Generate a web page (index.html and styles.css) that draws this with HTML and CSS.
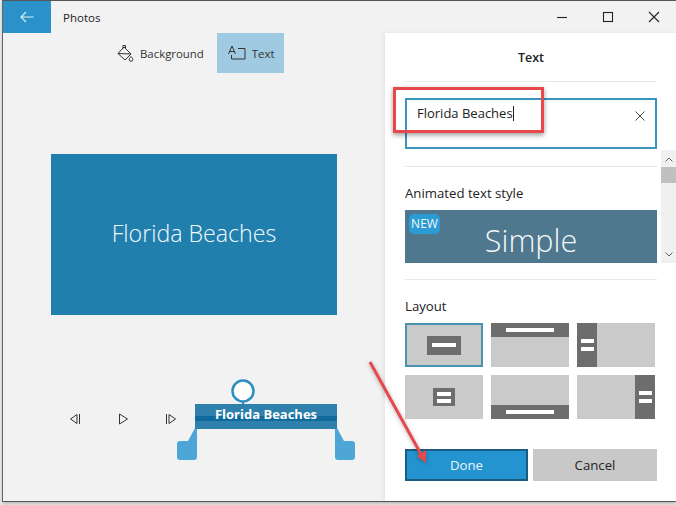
FILE: index.html
```html
<!DOCTYPE html>
<html lang="en">
<head>
<meta charset="utf-8">
<title>Photos</title>
<link rel="stylesheet" href="styles.css">
</head>
<body>
<div class="window">
  <header class="titlebar">
    <button class="back" aria-label="Back">
      <svg width="16" height="16" viewBox="0 0 16 16"><path d="M14.500 8H2M7 3 2 8l5 5" fill="none" stroke="#d9edf8" stroke-width="1.200"/></svg>
    </button>
    <span class="app-name">Photos</span>
    <div class="win-controls">
      <svg width="12" height="12" viewBox="0 0 12 12"><path d="M1 6.500h10" stroke="#222" stroke-width="1.100"/></svg>
      <svg width="12" height="12" viewBox="0 0 12 12"><rect x="1.500" y="1.500" width="9" height="9" fill="none" stroke="#222" stroke-width="1.100"/></svg>
      <svg width="12" height="12" viewBox="0 0 12 12"><path d="M1 1l10 10M11 1 1 11" stroke="#222" stroke-width="1.100"/></svg>
    </div>
  </header>
  <div class="content">
    <main class="stage">
      <nav class="tools">
        <div class="tool">
          <svg width="18" height="18" viewBox="0 0 18 18"><path d="M8 3 15 10 9 16 2 9.500zM2 9.500 15 10M7 4.500V1.500h2.500V4.500M15 12.500c-1 1.300-1.800 2-1.800 3a1.800 1.800 0 0 0 3.600 0c0-1-.8-1.700-1.800-3z" fill="none" stroke="#333" stroke-width="1"/></svg>
          <span>Background</span>
        </div>
        <div class="tool tool-active">
          <svg width="18" height="16" viewBox="0 0 18 16"><path d="M.500 9 4 1l3.500 8M2 6.500h4M10 3.500h7V14H3.500v-4" fill="none" stroke="#333" stroke-width="1"/></svg>
          <span>Text</span>
        </div>
      </nav>
      <div class="preview">Florida Beaches</div>
      <div class="timeline">
        <div class="transport">
          <svg width="12" height="12" viewBox="0 0 12 12"><path d="M8 1.500v9L1.500 6zM10.500 1v10" fill="none" stroke="#333" stroke-width="1"/></svg>
          <svg width="12" height="12" viewBox="0 0 12 12"><path d="M2.500 1v10L10.500 6z" fill="none" stroke="#333" stroke-width="1"/></svg>
          <svg width="12" height="12" viewBox="0 0 12 12"><path d="M4 1.500v9L10.500 6zM1.500 1v10" fill="none" stroke="#333" stroke-width="1"/></svg>
        </div>
        <div class="clip">
          <svg class="clip-art" width="178" height="85" viewBox="0 0 178 85">
            <circle cx="66" cy="13" r="10.500" fill="#fff" stroke="#2c8fc0" stroke-width="2.500"/>
            <path d="M66 23v5" stroke="#2c8fc0" stroke-width="2"/>
            <path d="M18 50h2V79a3 3 0 0 1-3 3H3a3 3 0 0 1-3-3V66a3 3 0 0 1 3-3H11z" fill="#4ea6d6"/>
            <path d="M160 50h-2V79a3 3 0 0 0 3 3h14a3 3 0 0 0 3-3V66a3 3 0 0 0-3-3h-8z" fill="#4ea6d6"/>
          </svg>
          <div class="clip-bar"><span>Florida Beaches</span></div>
        </div>
      </div>
    </main>
    <aside class="panel">
      <h1 class="panel-title">Text</h1>
      <div class="section section-input">
        <div class="text-input">
          <span class="value">Florida Beaches<i class="caret"></i></span>
          <svg width="10" height="10" viewBox="0 0 10 10"><path d="M.500.500l9 9M9.500.500l-9 9" stroke="#444" stroke-width="1"/></svg>
        </div>
      </div>
      <div class="scroll-area">
        <div class="scroll-content">
          <div class="section section-style">
            <h2 class="label">Animated text style</h2>
            <div class="style-tile"><span class="badge">NEW</span><span class="style-name">Simple</span></div>
          </div>
        </div>
        <div class="scrollbar">
          <svg width="8" height="5" viewBox="0 0 8 5"><path d="M.500 4.500 4 1l3.500 3.500" fill="none" stroke="#666"/></svg>
          <div class="thumb"></div>
          <svg class="down" width="8" height="5" viewBox="0 0 8 5"><path d="M.500.500 4 4 7.500.500" fill="none" stroke="#666"/></svg>
        </div>
      </div>
      <div class="section section-layout">
        <h2 class="label">Layout</h2>
        <div class="layouts">
          <div class="layout selected"><div class="block center wide"><b></b></div></div>
          <div class="layout"><div class="band top"><b></b></div></div>
          <div class="layout"><div class="side left"><b></b><b></b></div></div>
          <div class="layout"><div class="block center small"><b></b><b></b></div></div>
          <div class="layout"><div class="band bottom"><b></b></div></div>
          <div class="layout"><div class="side right"><b></b><b></b></div></div>
        </div>
      </div>
      <div class="actions">
        <button class="btn btn-done">Done</button>
        <button class="btn">Cancel</button>
      </div>
    </aside>
  </div>
</div>
<div class="callout"></div>
<svg class="arrow" width="676" height="505" viewBox="0 0 676 505">
  <path d="M370 362 422 456" stroke="#e8474c" stroke-width="3" fill="none"/>
  <path d="M426 463 417 456l9-6z" fill="#e8474c"/>
</svg>
</body>
</html>
```
FILE: styles.css
```css
* { box-sizing: border-box; }
html, body { margin: 0; height: 100%; }
body {
  background: #ececec;
  font-family: "Open Sans", "Noto Sans", sans-serif;
  color: #222;
  overflow: hidden;
  position: relative;
}
.window {
  height: 502px;
  margin-left: 2px;
  border-top: 1px solid #555;
  border-bottom: 1px solid #555;
  border-left: 1px solid #666;
  box-shadow: 0 2px 3px rgba(0,0,0,.2);
  background: #f2f2f2;
  display: flex;
  flex-direction: column;
}
.titlebar {
  height: 32px;
  display: flex;
  align-items: center;
  flex: none;
}
.back {
  width: 48px;
  height: 32px;
  border: 0;
  padding: 0;
  background: #2a92c8;
  display: flex;
  align-items: center;
  justify-content: center;
  margin-right: 12px;
}
.app-name { font-size: 11.500px; }
.win-controls {
  margin-left: auto;
  display: flex;
  gap: 34px;
  padding-right: 16px;
}
.content { flex: 1; display: flex; min-height: 0; }
.stage { width: 382px; flex: none; }
.tools {
  display: flex;
  height: 40px;
  padding-left: 106px;
}
.tool {
  display: flex;
  align-items: center;
  gap: 6px;
  font-size: 11.400px;
  padding: 0 7px;
  color: #333;
}
.tool-active {
  background: #9fcae1;
  margin-left: 6px;
  padding: 0 0 0 11px;
  gap: 6px;
  width: 67px;
}
.preview {
  margin: 81px 0 0 48px;
  width: 286px;
  height: 161px;
  padding-bottom: 4px;
  background: #217fae;
  color: #f4fafd;
  font-size: 23.200px;
  font-weight: 350;
  display: flex;
  align-items: center;
  justify-content: center;
}
.timeline {
  display: flex;
  margin: 63px 0 0 66px;
}
.transport {
  display: flex;
  gap: 36px;
  padding-top: 35px;
}
.clip {
  position: relative;
  width: 178px;
  height: 85px;
}
.clip-art { display: block; }
.clip-bar {
  position: absolute;
  left: 18px;
  top: 26px;
  width: 142px;
  height: 25px;
  background: linear-gradient(#2f80ad 0 12px, #0f6a9e 12px 17px, #2f80ad 17px);
  color: #fff;
  font-size: 13px;
  font-weight: 700;
  text-align: center;
  line-height: 20px;
}
.panel {
  width: 291px;
  flex: none;
  background: #fff;
  box-shadow: -2px 0 4px rgba(0,0,0,.06);
  padding: 0 0 0 20px;
  display: flex;
  flex-direction: column;
}
.panel-title {
  margin: 0;
  width: 252px;
  height: 49px;
  font-size: 12.500px;
  font-weight: 600;
  text-align: center;
  line-height: 49px;
  border-bottom: 1px solid #e8e8e8;
}
.section-input {
  width: 252px;
  padding: 16px 0 17px;
  border-bottom: 1px solid #e8e8e8;
}
.text-input {
  height: 51px;
  border: 2px solid #3a95bd;
  display: flex;
  justify-content: space-between;
  padding: 4px 10px 0 10px;
  font-size: 13px;
}
.text-input svg { margin-top: 7px; }
.value { line-height: 18px; }
.caret {
  display: inline-block;
  width: 1px;
  height: 15px;
  background: #222;
  vertical-align: -3px;
}
.scroll-area { position: relative; }
.scroll-content { width: 252px; }
.section-style {
  height: 113px;
  padding-top: 17px;
  border-bottom: 1px solid #e8e8e8;
}
.label {
  margin: 0;
  font-size: 13.200px;
  font-weight: 400;
  line-height: 18px;
}
.style-tile {
  margin-top: 8px;
  height: 53px;
  background: #4f788e;
  color: #f4f8fa;
  position: relative;
  text-align: center;
}
.badge {
  position: absolute;
  left: 4px;
  top: 4px;
  width: 31px;
  height: 20px;
  background: #2a9bd3;
  border-radius: 5px;
  font-size: 12px;
  line-height: 20px;
}
.style-name {
  font-size: 30.500px;
  font-weight: 350;
  line-height: 60px;
}
.scrollbar {
  position: absolute;
  left: 256px;
  top: -17px;
  width: 15px;
  height: 113px;
  background: #f0f0f0;
  display: flex;
  flex-direction: column;
  align-items: center;
  padding-top: 7px;
}
.thumb {
  width: 15px;
  height: 16px;
  margin-top: 5px;
  background: #c0c0c0;
}
.down { margin-top: auto; margin-bottom: 6px; }
.section-layout { width: 252px; padding-top: 17px; }
.layouts {
  margin-top: 8px;
  display: grid;
  grid-template-columns: repeat(3, 78px);
  grid-auto-rows: 44px;
  gap: 8px;
}
.layout {
  position: relative;
  background: #cacaca;
  display: flex;
}
.layout.selected { outline: 2px solid #4a93b0; outline-offset: -2px; }
.layout b { display: block; height: 4px; background: #fff; }
.block {
  margin: auto;
  background: #6d6d6d;
  display: flex;
  flex-direction: column;
  justify-content: center;
  align-items: center;
  gap: 3px;
}
.block.wide { width: 34px; height: 19px; }
.block.wide b { width: 24px; }
.block.small { width: 22px; height: 18px; }
.block.small b { width: 14px; }
.band {
  width: 100%;
  height: 14px;
  background: #6d6d6d;
  display: flex;
  align-items: center;
  justify-content: center;
}
.band b { width: 48px; }
.band.bottom { margin-top: auto; }
.side {
  width: 20px;
  height: 100%;
  background: #6d6d6d;
  display: flex;
  flex-direction: column;
  justify-content: center;
  align-items: center;
  gap: 4px;
}
.side b { width: 13px; }
.side.right { margin-left: auto; }
.actions {
  display: flex;
  gap: 5px;
  width: 252px;
  margin-top: 30px;
}
.btn {
  width: 124px;
  height: 32px;
  border: 0;
  background: #c8c8c8;
  color: #222;
  font: 400 13.200px "Open Sans", "Noto Sans", sans-serif;
}
.btn-done {
  width: 123px;
  background: #2394cf;
  color: #eaf5fb;
  border: 2px solid #1b5c80;
}
.callout {
  position: absolute;
  left: 393px;
  top: 87px;
  width: 151px;
  height: 46px;
  border: 3px solid #e8474c;
  box-shadow: 0 2px 5px rgba(0,0,0,.4);
}
.arrow {
  position: absolute;
  left: 0;
  top: 0;
  pointer-events: none;
  filter: drop-shadow(0 1px 2px rgba(0,0,0,.3));
}
```
